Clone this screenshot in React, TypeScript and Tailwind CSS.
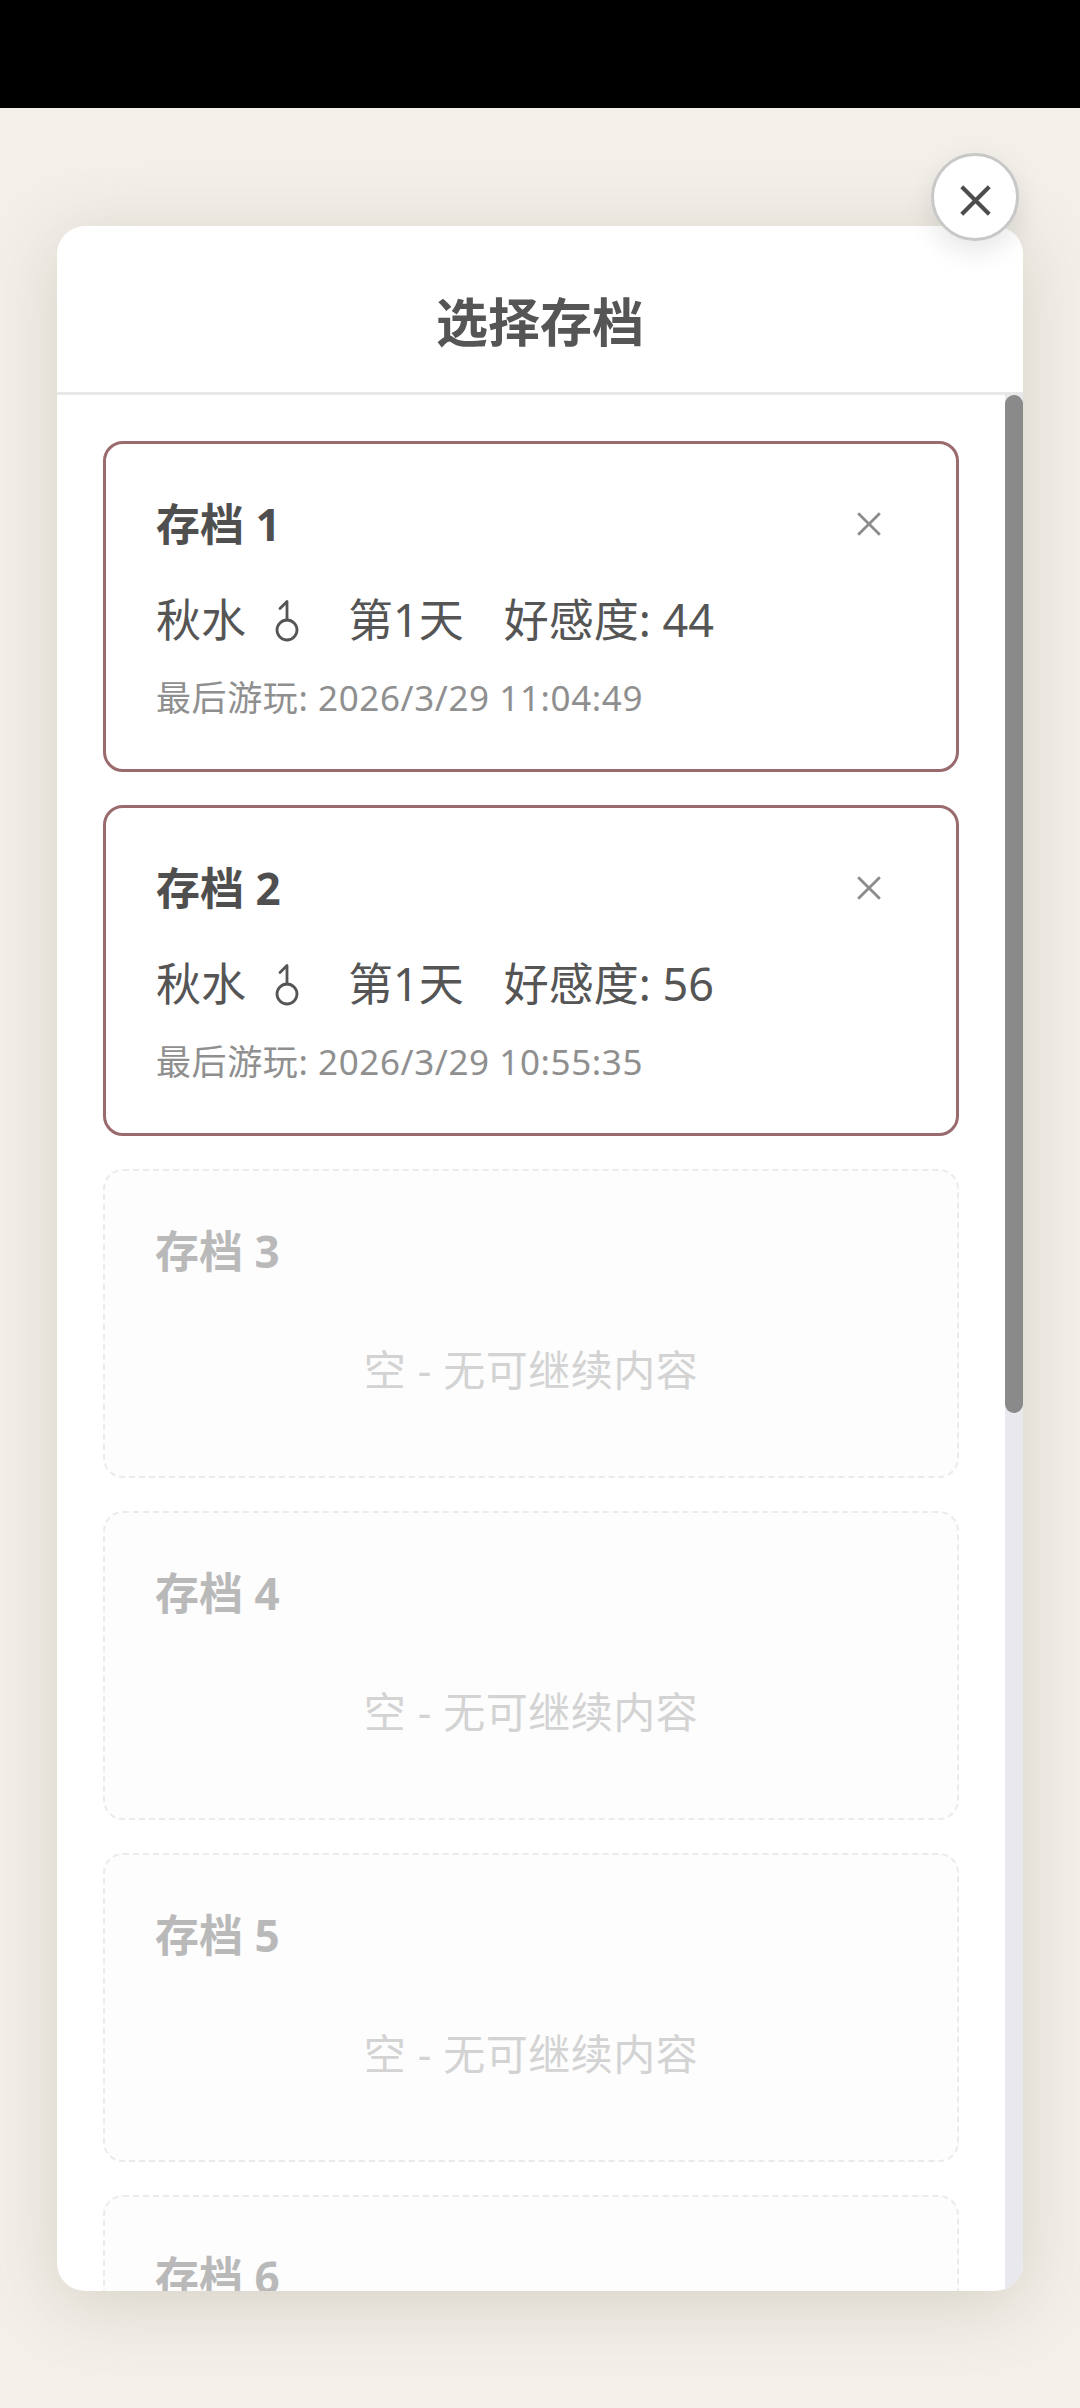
import React from "react";

type Slot = {
  id: number;
  filled: boolean;
  affection?: number;
  time?: string;
};

const slots: Slot[] = [
  { id: 1, filled: true, affection: 44, time: "2026/3/29 11:04:49" },
  { id: 2, filled: true, affection: 56, time: "2026/3/29 10:55:35" },
  { id: 3, filled: false },
  { id: 4, filled: false },
  { id: 5, filled: false },
  { id: 6, filled: false },
  { id: 7, filled: false },
  { id: 8, filled: false },
  { id: 9, filled: false },
  { id: 10, filled: false },
];

function XIcon({ size, stroke, color }: { size: number; stroke: number; color: string }) {
  return (
    <svg width={size} height={size} viewBox="0 0 24 24" fill="none">
      <path d="M2 2 L22 22 M22 2 L2 22" stroke={color} strokeWidth={stroke} strokeLinecap="butt" />
    </svg>
  );
}

function MaleIcon() {
  return (
    <svg width="26" height="44" viewBox="0 0 26 44" fill="none" className="inline-block">
      <circle cx="13" cy="32" r="10" stroke="#555555" strokeWidth="2.8" />
      <path d="M13 22 L13 4 M13 3.5 L6 10.5" stroke="#555555" strokeWidth="2.8" strokeLinecap="round" />
    </svg>
  );
}

function FilledCard({ slot }: { slot: Slot }) {
  return (
    <div className="shrink-0 rounded-[20px] border-[3px] border-[#9a6b6e] bg-white px-[50px] pt-[52px] pb-[48px]">
      <div className="flex h-[56px] items-center justify-between">
        <span className="text-[44px] font-bold leading-[56px] text-[#4f4f4f]">存档 {slot.id}</span>
        <span className="mr-[23px] flex h-[28px] w-[28px] items-center justify-center">
          <XIcon size={26} stroke={2.6} color="#8c8c8c" />
        </span>
      </div>
      <div className="mt-[38px] flex h-[60px] items-center text-[45px] leading-[60px] text-[#555555]">
        <span className="flex items-center gap-[28px]">
          <span>秋水</span>
          <MaleIcon />
        </span>
        <span className="ml-[48px]">第1天</span>
        <span className="ml-[40px]">好感度: {slot.affection}</span>
      </div>
      <div className="mt-[25px] h-[46px] text-[35px] leading-[46px] tracking-[0.6px] text-[#8f8f8f]">
        最后游玩: {slot.time}
      </div>
    </div>
  );
}

function EmptyCard({ slot }: { slot: Slot }) {
  return (
    <div className="shrink-0 rounded-[20px] border-2 border-dashed border-[#ebebeb] bg-[#fdfdfd] px-[50px] pt-[52px] pb-[79px]">
      <div className="h-[56px] text-[44px] font-bold leading-[56px] text-[#b9b9b9]">存档 {slot.id}</div>
      <div className="mt-[64px] h-[54px] text-center text-[42px] leading-[54px] tracking-[0.5px] text-[#d3d3d3]">
        空 - 无可继续内容
      </div>
    </div>
  );
}

export default function App() {
  return (
    <div
      className="relative h-[2408px] w-[1080px] overflow-hidden bg-[#f3f0ea]"
      style={{ fontFamily: '"Noto Sans", "Noto Sans CJK SC", sans-serif' }}
    >
      <div className="h-[108px] bg-black" />
      <div className="ml-[57px] mt-[118px] flex h-[2065px] w-[966px] flex-col overflow-hidden rounded-[28px] bg-white shadow-[0_12px_70px_rgba(110,95,70,0.22)]">
        <div className="flex h-[169px] shrink-0 items-center justify-center border-b-[3px] border-[#e8e8e8] pt-[26px]">
          <h1 className="text-[52px] font-bold leading-none text-[#555555]">选择存档</h1>
        </div>
        <div className="flex min-h-0 flex-1">
          <div className="flex min-w-0 flex-1 flex-col gap-[33px] overflow-hidden px-[46px] pt-[46px]">
            {slots.map((s) => (s.filled ? <FilledCard key={s.id} slot={s} /> : <EmptyCard key={s.id} slot={s} />))}
          </div>
          <div className="w-[18px] shrink-0 bg-[#e9e9ed]">
            <div className="h-[1018px] rounded-full bg-[#8a8a8a]" />
          </div>
        </div>
      </div>
      <button className="absolute left-[931px] top-[153px] flex h-[88px] w-[88px] items-center justify-center rounded-full border-[3px] border-[#c8c8c8] bg-white pt-[6px] shadow-[0_10px_28px_rgba(0,0,0,0.10)]">
        <XIcon size={33} stroke={3} color="#4d4d4d" />
      </button>
    </div>
  );
}
